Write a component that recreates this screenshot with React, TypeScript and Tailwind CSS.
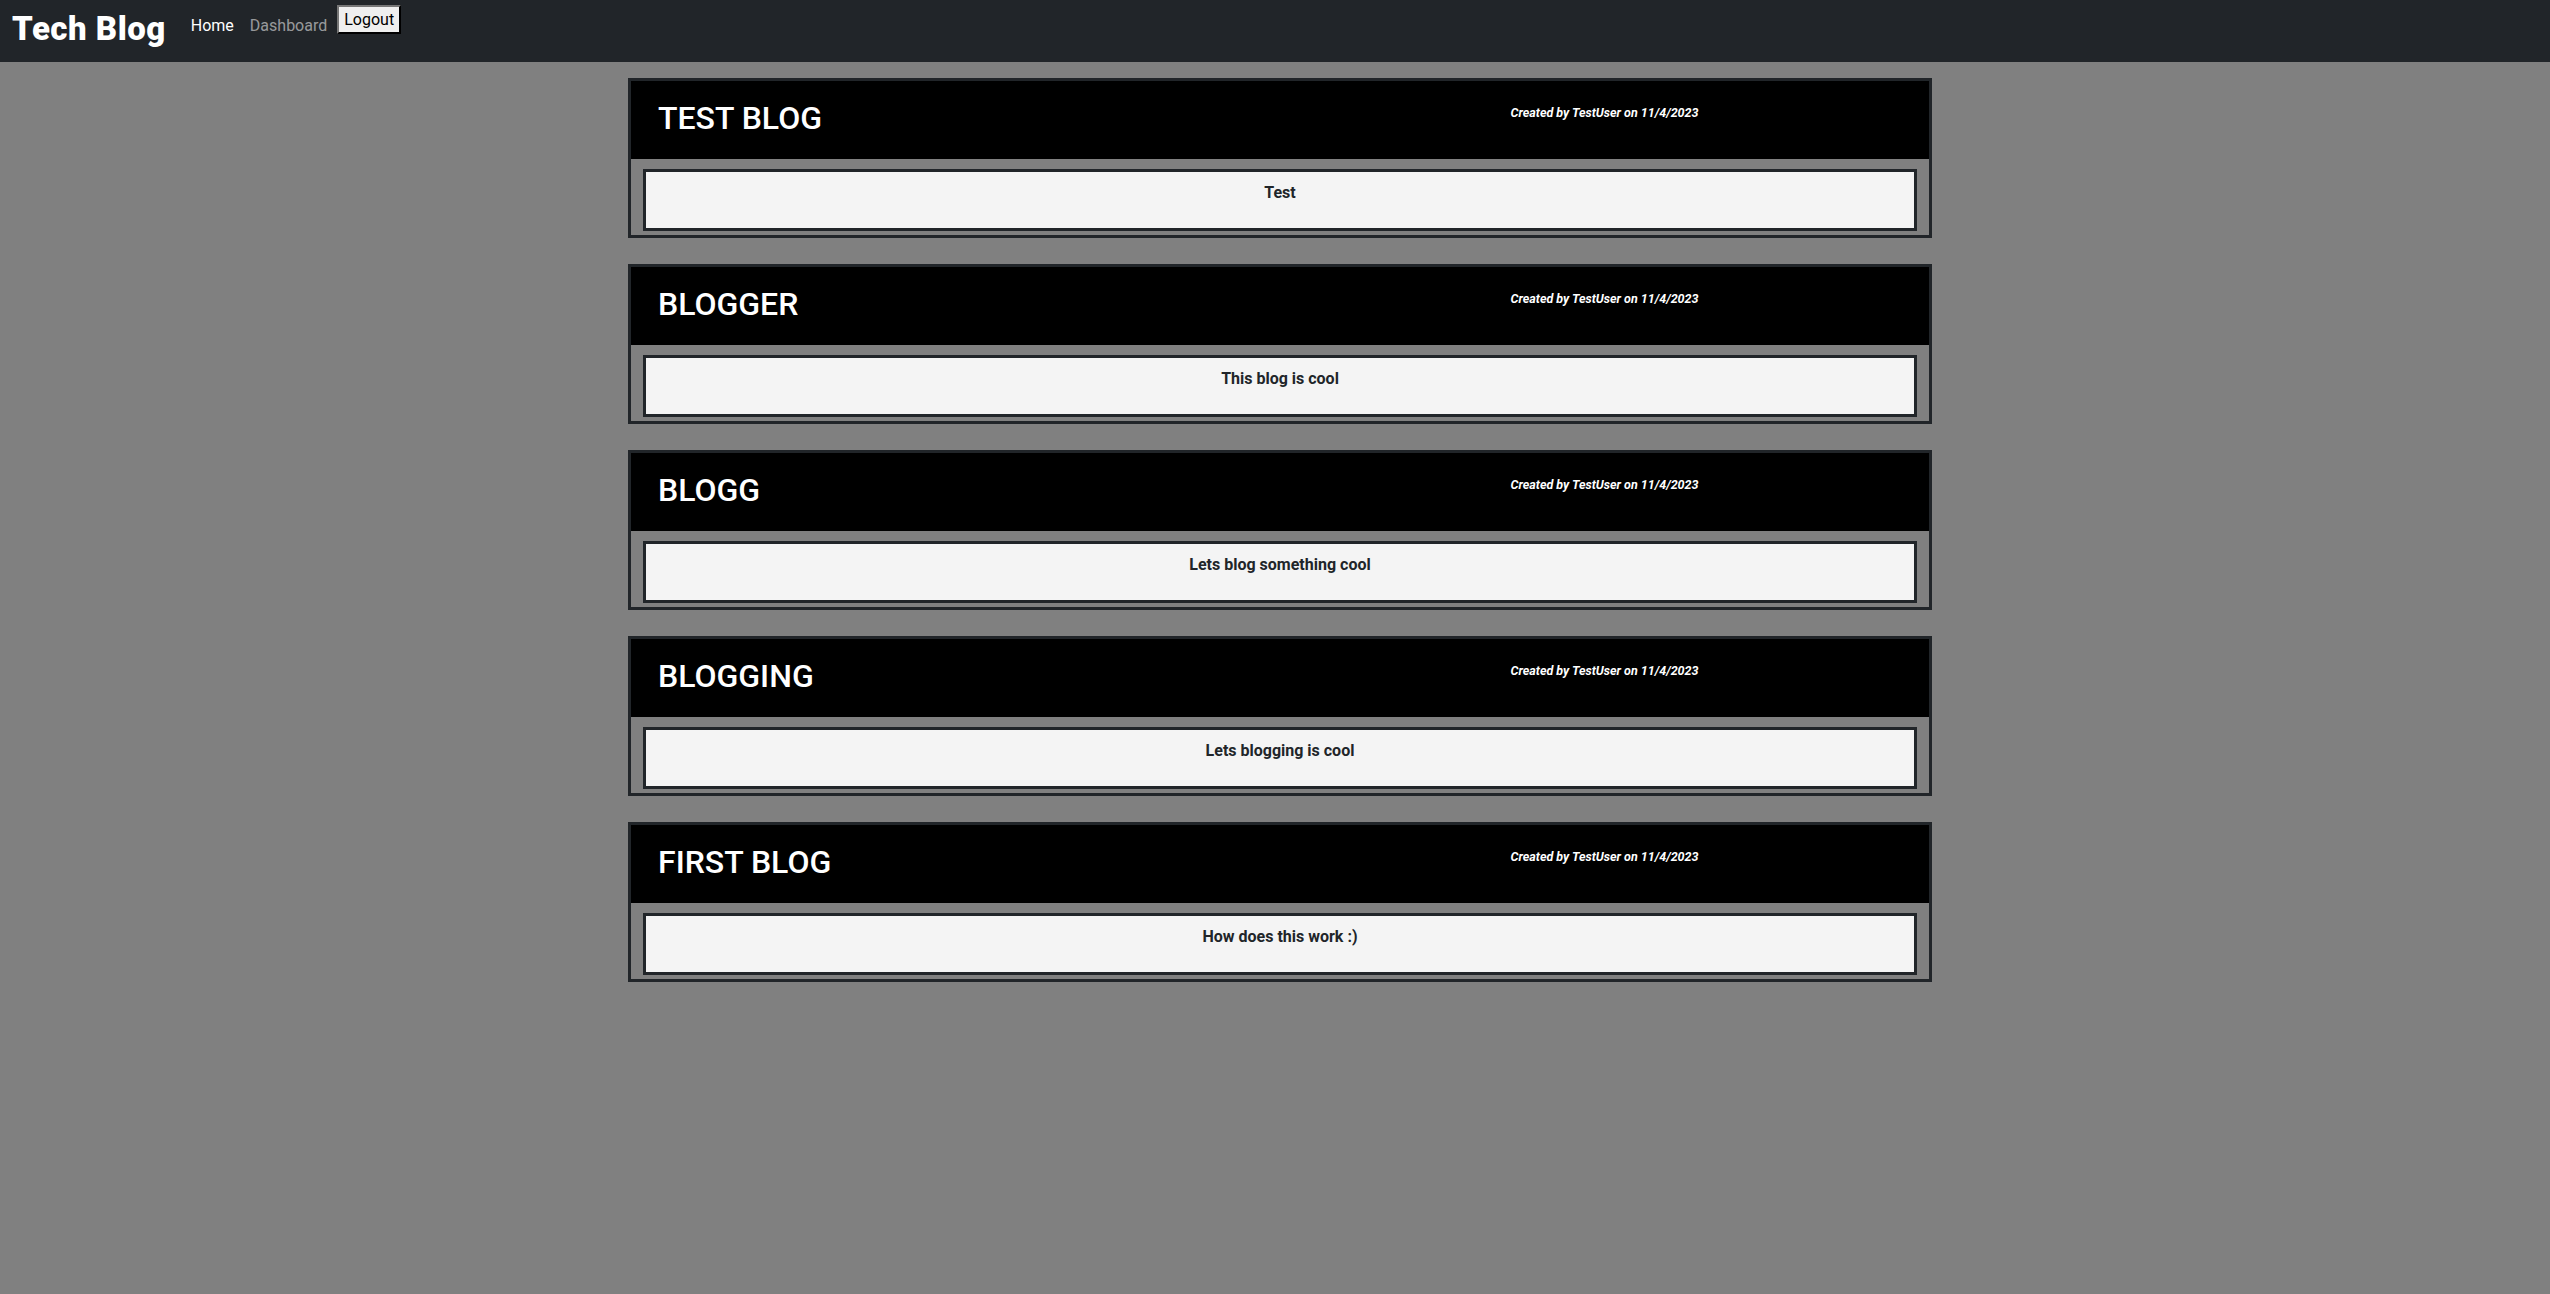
const posts = [
  { title: "TEST BLOG", body: "Test" },
  { title: "BLOGGER", body: "This blog is cool" },
  { title: "BLOGG", body: "Lets blog something cool" },
  { title: "BLOGGING", body: "Lets blogging is cool" },
  { title: "FIRST BLOG", body: "How does this work :)" },
]

function Navbar() {
  return (
    <nav className="h-[62px] bg-[#212529] flex items-start pl-[12px]">
      <a className="mt-[9px] text-white font-black text-[33px] leading-[40px] tracking-[0.5px] mr-[17px]">
        Tech Blog
      </a>
      <a className="mt-[14px] px-[8px] text-white text-[16px] leading-[24px]">Home</a>
      <a className="mt-[14px] px-[8px] text-[rgba(255,255,255,0.55)] text-[16px] leading-[24px]">Dashboard</a>
      <button className="ml-[2px] mt-[5px] h-[29px] px-[5px] bg-[#efefef] text-black text-[16px] leading-[20px] border-2 border-t-[#767676] border-l-[#767676] border-r-black border-b-black">
        Logout
      </button>
    </nav>
  )
}

function PostCard({ title, body }: { title: string; body: string }) {
  return (
    <div className="w-[1304px] border-[3px] border-[#212529] bg-[#808080]">
      <div className="h-[78px] bg-black grid grid-cols-2">
        <h2 className="pl-[27px] pt-[18px] text-white text-[32px] leading-[38px] font-medium">{title}</h2>
        <p className="pt-[23px] text-center text-white text-[12.5px] leading-[18px] font-bold italic">
          Created by TestUser on 11/4/2023
        </p>
      </div>
      <div className="mt-[10px] mb-[4px] mx-[12px] border-[3px] border-[#212529] bg-[#f4f4f4] h-[62px] pt-[9px]">
        <p className="text-center text-[#212529] text-[16px] leading-[24px] font-bold">{body}</p>
      </div>
    </div>
  )
}

export default function App() {
  return (
    <div className="min-h-screen bg-[#808080] font-['Roboto',sans-serif]">
      <Navbar />
      <main className="pt-[16px] pl-[10px] flex flex-col items-center gap-[26px]">
        {posts.map((p) => (
          <PostCard key={p.title} title={p.title} body={p.body} />
        ))}
      </main>
    </div>
  )
}
